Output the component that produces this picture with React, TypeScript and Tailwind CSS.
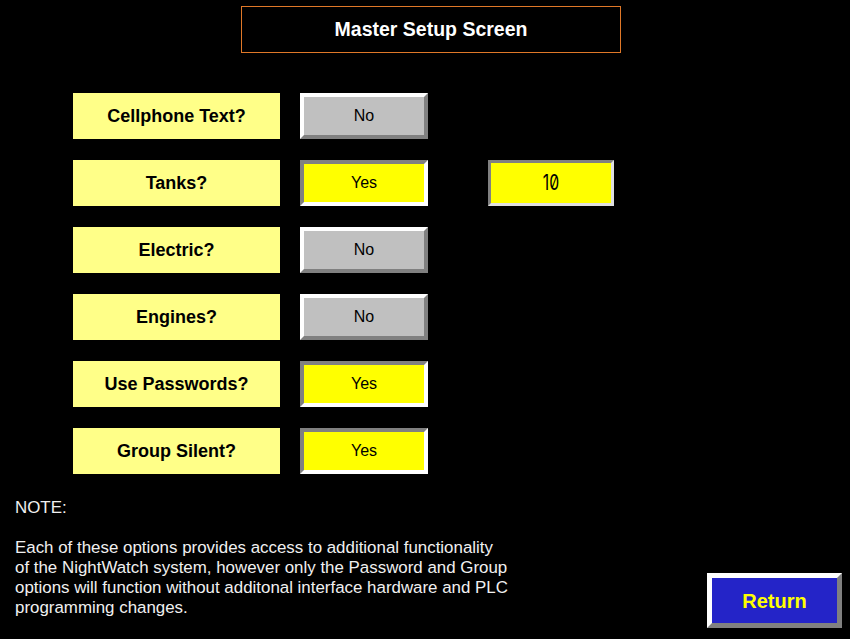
const rows = [
  { label: "Cellphone Text?", on: false },
  { label: "Tanks?", on: true, extra: "10" },
  { label: "Electric?", on: false },
  { label: "Engines?", on: false },
  { label: "Use Passwords?", on: true },
  { label: "Group Silent?", on: true },
];

function Toggle({ on }: { on: boolean }) {
  return on ? (
    <div className="flex h-[46px] w-[128px] items-center justify-center border-4 border-t-[#808080] border-l-[#808080] border-b-white border-r-white bg-[#ffff00] text-[16px] text-black">
      Yes
    </div>
  ) : (
    <div className="flex h-[46px] w-[128px] items-center justify-center border-4 border-t-white border-l-white border-b-[#808080] border-r-[#808080] bg-[#c0c0c0] text-[16px] text-black">
      No
    </div>
  );
}

export default function App() {
  return (
    <div className="flex h-[639px] w-[850px] flex-col bg-black font-['Liberation_Sans',Arial,sans-serif]">
      {/* Header */}
      <div className="ml-[241px] mt-[6px] flex h-[47px] w-[380px] items-center justify-center border border-[#e07828] text-[19.5px] font-bold text-white">
        Master Setup Screen
      </div>

      {/* Options */}
      <div className="ml-[73px] mt-[40px] flex flex-col gap-[21px]">
        {rows.map((row) => (
          <div key={row.label} className="flex items-center">
            <div className="flex h-[46px] w-[207px] items-center justify-center bg-[#ffff88] text-[18px] font-bold text-black">
              {row.label}
            </div>
            <div className="ml-[20px]">
              <Toggle on={row.on} />
            </div>
            {row.extra && (
              <div className="ml-[60px] flex h-[46px] w-[126px] items-center justify-center border-[3px] border-t-[#808080] border-l-[#808080] border-b-[#e0e0e0] border-r-[#e0e0e0] bg-[#ffff00] text-black">
                <span className="inline-block scale-x-75 font-['Inter',sans-serif] text-[21px] slashed-zero">
                  {row.extra}
                </span>
              </div>
            )}
          </div>
        ))}
      </div>

      {/* Note + return */}
      <div className="flex flex-1 items-end justify-between pb-[11px] pl-[15px] pr-[8px]">
        <div className="mb-[10px] text-[16.9px] leading-[20px] text-[#f0f0f0]">
          <p>NOTE:</p>
          <p className="mt-[20px]">
            Each of these options provides access to additional functionality
            <br />
            of the NightWatch system, however only the Password and Group
            <br />
            options will function without additonal interface hardware and PLC
            <br />
            programming changes.
          </p>
        </div>
        <div className="flex h-[55px] w-[135px] items-center justify-center border-[5px] border-t-white border-l-white border-b-[#808080] border-r-[#808080] bg-[#2424c8] text-[20px] font-bold text-[#ffff00]">
          Return
        </div>
      </div>
    </div>
  );
}
